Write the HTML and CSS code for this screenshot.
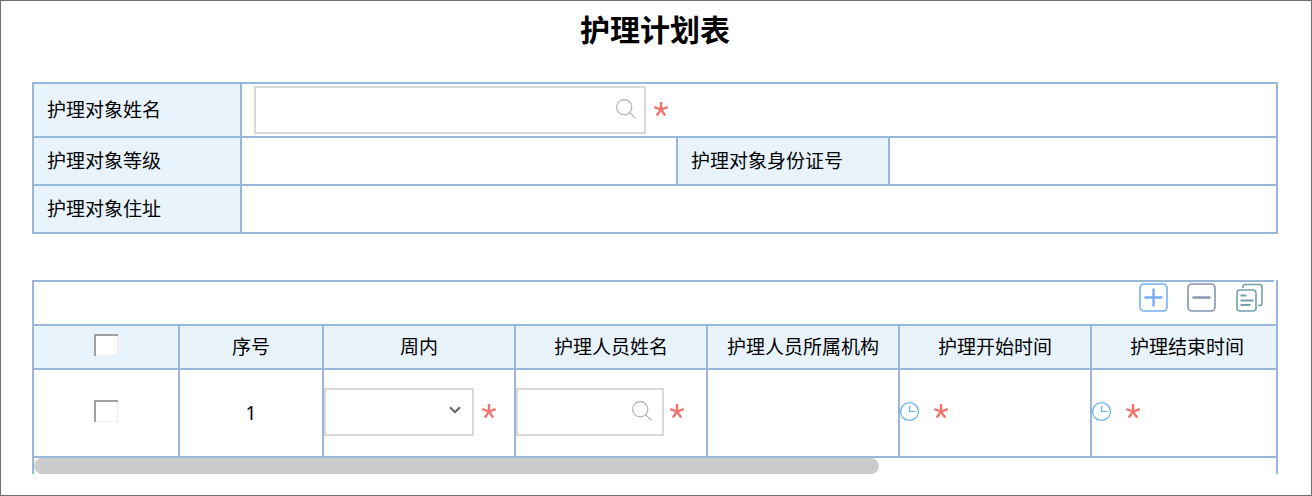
FILE: index.html
```
<!DOCTYPE html>
<html lang="zh-CN">
    <head>
        <title>护理计划表</title>
        <meta charset="UTF-8">
        <meta name="viewport" content="width=device-width, initial-scale=1.0">
        <link rel="stylesheet" href="styles.css">
    </head>
    <body>
        <!-- shared icons -->
        <svg class="sprite" aria-hidden="true">
            <symbol id="search" viewBox="0 0 20 20">
                <circle cx="8.2" cy="8.2" r="7.6"/>
                <path d="M13.6 13.6L19.4 19.4"/>
            </symbol>
            <symbol id="star" viewBox="0 0 14 14">
                <path d="M7 0V7.5M0.3 5L7 7.5L13.7 5M2.8 13.6L7 7.5L11.2 13.6"/>
            </symbol>
            <symbol id="clock" viewBox="0 0 20 20">
                <circle cx="9.5" cy="9.5" r="8.9"/>
                <path d="M9.5 4V9.5H15.2"/>
            </symbol>
        </svg>

        <form class="page">
            <h1>护理计划表</h1>

            <table class="info">
                <colgroup>
                    <col class="col-label">
                    <col>
                    <col class="col-label2">
                    <col class="col-last">
                </colgroup>
                <tr class="tall">
                    <th><label for="name">护理对象姓名</label></th>
                    <td colspan="3">
                        <div class="line">
                            <div class="field field-long">
                                <input type="text" id="name">
                                <button type="button" aria-label="搜索"><svg class="search"><use href="#search"/></svg></button>
                            </div>
                            <svg class="star"><use href="#star"/></svg>
                        </div>
                    </td>
                </tr>
                <tr>
                    <th>护理对象等级</th>
                    <td></td>
                    <th>护理对象身份证号</th>
                    <td></td>
                </tr>
                <tr>
                    <th>护理对象住址</th>
                    <td colspan="3"></td>
                </tr>
            </table>

            <div class="plan">
                <div class="toolbar">
                    <button type="button" aria-label="添加">
                        <svg class="tool add" viewBox="0 0 29 29">
                            <rect x="1" y="1" width="27" height="27" rx="4"/>
                            <path d="M5.5 14.5H23.5M14.5 5.5V23.5"/>
                        </svg>
                    </button>
                    <button type="button" aria-label="删除">
                        <svg class="tool remove" viewBox="0 0 29 29">
                            <rect x="1" y="1" width="27" height="27" rx="4"/>
                            <path d="M5.5 14.5H23.5"/>
                        </svg>
                    </button>
                    <button type="button" aria-label="复制">
                        <svg class="tool copy" viewBox="0 0 29 29">
                            <rect x="2" y="7" width="19" height="21" rx="3"/>
                            <path d="M8 5V4Q8 1.5 10.5 1.5H24.5Q27 1.5 27 4V20Q27 22.5 24.5 22.5H23"/>
                            <path class="text-lines" d="M5.5 12.5H11.5M5.5 17.5H18.5M5.5 22H15.5"/>
                        </svg>
                    </button>
                </div>
                <div class="scroll">
                    <table class="grid">
                        <colgroup>
                            <col class="col-check">
                            <col class="col-no">
                            <col span="5">
                        </colgroup>
                        <thead>
                            <tr>
                                <th><input type="checkbox" aria-label="全选"></th>
                                <th>序号</th>
                                <th>周内</th>
                                <th>护理人员姓名</th>
                                <th>护理人员所属机构</th>
                                <th>护理开始时间</th>
                                <th>护理结束时间</th>
                            </tr>
                        </thead>
                        <tbody>
                            <tr>
                                <td><input type="checkbox" aria-label="选择"></td>
                                <td>1</td>
                                <td>
                                    <div class="line">
                                        <div class="field field-select">
                                            <select aria-label="周内"><option></option></select>
                                            <svg class="arrow" viewBox="0 0 12 8"><path d="M1 1.2L6 6.2L11 1.2"/></svg>
                                        </div>
                                        <svg class="star"><use href="#star"/></svg>
                                    </div>
                                </td>
                                <td>
                                    <div class="line line-tight">
                                        <div class="field field-short">
                                            <input type="text" aria-label="护理人员姓名">
                                            <button type="button" aria-label="搜索"><svg class="search"><use href="#search"/></svg></button>
                                        </div>
                                        <svg class="star"><use href="#star"/></svg>
                                    </div>
                                </td>
                                <td></td>
                                <td>
                                    <div class="line line-time">
                                        <button type="button" aria-label="护理开始时间"><svg class="clock"><use href="#clock"/></svg></button>
                                        <svg class="star"><use href="#star"/></svg>
                                    </div>
                                </td>
                                <td>
                                    <div class="line line-time">
                                        <button type="button" aria-label="护理结束时间"><svg class="clock"><use href="#clock"/></svg></button>
                                        <svg class="star"><use href="#star"/></svg>
                                    </div>
                                </td>
                            </tr>
                        </tbody>
                    </table>
                </div>
                <div class="bar"><div class="thumb"></div></div>
            </div>
        </form>
    </body>
</html>
```
FILE: styles.css
```
*{
    box-sizing: border-box;
}
body{
    margin: 0;
    background: white;
    color: black;
    font-family: "Noto Sans", "Noto Sans CJK SC", sans-serif;
    font-size: 19px;
    line-height: 28px;
}
.sprite{
    position: absolute;
    width: 0;
    height: 0;
}
svg{
    display: block;
    flex: none;
    fill: none;
}
button{
    display: block;
    padding: 0;
    border: 0;
    background: none;
    cursor: pointer;
}
.page{
    min-height: 100vh;
    padding: 7px 33px 20px 31px;
    border: 1px solid #707070;
}
h1{
    margin: 0 0 30px;
    font-size: 30px;
    line-height: 44px;
    text-align: center;
}
table{
    table-layout: fixed;
}
th{
    background: #e8f3fc;
    font-weight: normal;
}

/* top form */
.info{
    width: 100%;
    border-collapse: collapse;
}
.info th, .info td{
    height: 48px;
    padding: 0 12px;
    border: 2px solid #98b8da;
    text-align: left;
}
.info th{
    padding: 0 13px;
}
.info .tall th, .info .tall td{
    height: 54px;
}
.col-label{
    width: 208px;
}
.col-label2{
    width: 212px;
}
.col-last{
    width: 388px;
}

/* fields */
.line{
    display: flex;
    align-items: center;
    gap: 8px;
}
.line-tight{
    gap: 6px;
}
.line-time{
    gap: 14px;
}
.field{
    display: flex;
    align-items: center;
    height: 48px;
    border: 2px solid #d9d9d9;
    background: white;
}
.field-long{
    width: 392px;
    padding-right: 8px;
}
.field-short{
    width: 148px;
    padding-right: 10px;
}
.field-select{
    display: grid;
    width: 150px;
}
.field input, .field select{
    flex: 1;
    width: 100%;
    min-width: 0;
    height: 100%;
    padding: 0 8px;
    border: 0;
    outline: none;
    background: none;
    font: inherit;
    appearance: none;
}
.field select, .arrow{
    grid-area: 1 / 1;
}
.arrow{
    justify-self: end;
    width: 12px;
    height: 8px;
    margin: 0 11px 4px 0;
    stroke: #606060;
    stroke-width: 2;
    pointer-events: none;
}
.search{
    width: 20px;
    height: 20px;
    margin-bottom: 2px;
    stroke: #b0b0b0;
    stroke-width: 1.2;
}
.star{
    width: 14px;
    height: 14px;
    margin-bottom: 2px;
    stroke: #f2726c;
    stroke-width: 2.4;
}
.clock{
    width: 20px;
    height: 20px;
    stroke: #5cb3f0;
    stroke-width: 1.2;
}

/* plan list */
.plan{
    margin-top: 46px;
    border: solid #98b8da;
    border-width: 0 2px;
}
.toolbar{
    display: flex;
    justify-content: flex-end;
    align-items: flex-start;
    gap: 19px;
    height: 44px;
    margin-right: 2px;
    padding: 1px 10px 0 0;
    border-top: 2px solid #98b8da;
}
.tool{
    width: 29px;
    height: 29px;
    stroke-width: 2.4;
}
.tool rect{
    stroke-width: 1.6;
}
.add{
    stroke: #74aff8;
}
.remove{
    stroke: #8495ae;
}
.copy{
    stroke: #72a1aa;
    stroke-width: 1.6;
}
.text-lines{
    stroke-width: 2;
}
.scroll{
    overflow-x: auto;
    scrollbar-width: none;
}
.grid{
    width: 1250px;
    border-collapse: separate;
    border-spacing: 0;
}
.grid th, .grid td{
    padding: 0;
    border: solid #98b8da;
    border-width: 0 2px 2px 0;
    text-align: center;
}
.grid th{
    height: 46px;
    border-top-width: 2px;
}
.grid td{
    height: 88px;
}
.col-check{
    width: 146px;
}
.col-no{
    width: 144px;
}
.grid input[type=checkbox]{
    display: block;
    width: 24px;
    height: 22px;
    margin: 0 auto 4px;
    border: solid #a0a0a0;
    border-width: 2px 0 0 2px;
    background: white;
    box-shadow: inset -1px -1px #eeeeee;
    appearance: none;
}
.grid .line{
    padding-bottom: 2px;
}
.bar{
    height: 16px;
}
.thumb{
    width: 68%;
    height: 16px;
    border-radius: 8px;
    background: #cccccc;
}
```
